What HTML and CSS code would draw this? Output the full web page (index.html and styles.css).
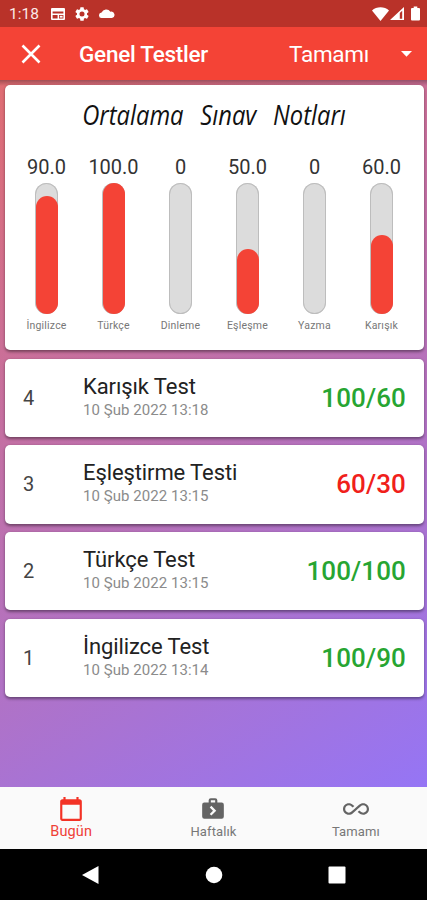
FILE: index.html
```html
<!DOCTYPE html>
<html lang="tr">
<head>
<meta charset="utf-8">
<meta name="viewport" content="width=device-width, initial-scale=1">
<title>Genel Testler</title>
<link rel="stylesheet" href="styles.css">
</head>
<body>
<div class="screen">
  <div class="status">
    <span class="clock">1:18</span>
    <svg class="s-news" viewBox="0 0 14 12"><path fill-rule="evenodd" d="M1 0h12a1 1 0 0 1 1 1v10a1 1 0 0 1-1 1H1a1 1 0 0 1-1-1V1a1 1 0 0 1 1-1zM1.600 3.400v2.200h10.800V3.400zM1.600 7v3.400h5V7zM8 7v3.400h4.400V7z"/><path d="M8.800 7.800h2.800v1.800H8.800z"/></svg>
    <svg class="s-gear" viewBox="2 2 20 20"><path d="M19.140 12.940c.04-.3.06-.61.06-.94s-.02-.64-.07-.94l2.030-1.580a.49.49 0 0 0 .12-.61l-1.920-3.320a.49.49 0 0 0-.59-.22l-2.390.96a7 7 0 0 0-1.620-.94l-.36-2.540a.48.48 0 0 0-.48-.41h-3.840a.48.48 0 0 0-.47.41l-.36 2.540a7.300 7.300 0 0 0-1.620.94l-2.390-.96a.48.48 0 0 0-.59.22L2.740 8.870a.47.47 0 0 0 .12.61l2.030 1.580a6 6 0 0 0 0 1.880l-2.030 1.580a.49.49 0 0 0-.12.61l1.920 3.320c.12.22.37.29.59.22l2.390-.96c.5.38 1.030.7 1.620.94l.36 2.540c.05.24.24.41.48.41h3.840c.24 0 .44-.17.47-.41l.36-2.540a7 7 0 0 0 1.620-.94l2.390.96c.22.08.47 0 .59-.22l1.920-3.320a.47.47 0 0 0-.12-.61zM12 15.600a3.600 3.600 0 1 1 0-7.200 3.600 3.600 0 0 1 0 7.200z"/></svg>
    <svg class="s-cloud" viewBox="0 0 16 9"><path d="M2.800 9a2.700 2.700 0 0 1-.2-5.400A5 5 0 0 1 11.400 2.700 3.200 3.200 0 0 1 13 9z"/></svg>
    <span class="grow"></span>
    <svg class="s-wifi" viewBox="0 0 17 14"><path d="M8.500 14 0 3.500C4.500-.9 12.500-.9 17 3.500z"/></svg>
    <svg class="s-signal" viewBox="0 0 14 13"><path fill-rule="evenodd" d="M0 13 14 0v13zM9.800 6v5.700h2.400V3.700z"/></svg>
    <svg class="s-battery" viewBox="0 0 9 14"><path d="M2.700 0h3.600v1.500H8a1 1 0 0 1 1 1V13a1 1 0 0 1-1 1H1a1 1 0 0 1-1-1V2.500a1 1 0 0 1 1-1h1.700z"/></svg>
  </div>
  <header class="appbar">
    <svg class="close" viewBox="0 0 20 20"><path d="M1.500 1.500 18.500 18.500M18.500 1.500 1.500 18.500"/></svg>
    <h1 class="title">Genel Testler</h1>
    <span class="filter">Tamamı</span>
    <svg class="caret" viewBox="0 0 11 6"><path d="M0 0h11L5.500 5.700z"/></svg>
  </header>
  <main class="content">
    <section class="card chart">
      <h2 class="chart-title">Ortalama Sınav Notları</h2>
      <div class="bars">
        <div class="bar"><span class="value">90.0</span><div class="track"><div class="fill" style="height:90%"></div></div><span class="label">İngilizce</span></div>
        <div class="bar"><span class="value">100.0</span><div class="track"><div class="fill" style="height:100%"></div></div><span class="label">Türkçe</span></div>
        <div class="bar"><span class="value">0</span><div class="track"></div><span class="label">Dinleme</span></div>
        <div class="bar"><span class="value">50.0</span><div class="track"><div class="fill" style="height:50%"></div></div><span class="label">Eşleşme</span></div>
        <div class="bar"><span class="value">0</span><div class="track"></div><span class="label">Yazma</span></div>
        <div class="bar"><span class="value">60.0</span><div class="track"><div class="fill" style="height:60%"></div></div><span class="label">Karışık</span></div>
      </div>
    </section>
    <article class="card row"><span class="num">4</span><div class="info"><div class="name">Karışık Test</div><div class="date">10 Şub 2022 13:18</div></div><span class="score">100/60</span></article>
    <article class="card row"><span class="num">3</span><div class="info"><div class="name">Eşleştirme Testi</div><div class="date">10 Şub 2022 13:15</div></div><span class="score low">60/30</span></article>
    <article class="card row"><span class="num">2</span><div class="info"><div class="name">Türkçe Test</div><div class="date">10 Şub 2022 13:15</div></div><span class="score">100/100</span></article>
    <article class="card row"><span class="num">1</span><div class="info"><div class="name">İngilizce Test</div><div class="date">10 Şub 2022 13:14</div></div><span class="score">100/90</span></article>
  </main>
  <nav class="tabs">
    <div class="tab active">
      <svg viewBox="0 0 24 24"><path d="M20 3h-1V1h-2v2H7V1H5v2H4c-1.100 0-2 .9-2 2v16c0 1.100.9 2 2 2h16c1.100 0 2-.9 2-2V5c0-1.100-.9-2-2-2zm0 18H4V8h16v13z"/></svg>
      <span>Bugün</span>
    </div>
    <div class="tab">
      <svg viewBox="0 0 24 24"><path fill-rule="evenodd" d="M10 2h4a2 2 0 0 1 2 2v2h4a2 2 0 0 1 2 2v11a2 2 0 0 1-2 2H4a2 2 0 0 1-2-2V8a2 2 0 0 1 2-2h4V4a2 2 0 0 1 2-2zm0 2v2h4V4zm.5 14 4.500-4.500L10.500 9 9 10.500l3 3-3 3z"/></svg>
      <span>Haftalık</span>
    </div>
    <div class="tab">
      <svg viewBox="0 0 24 24"><path d="M18.600 6.620c-1.440 0-2.800.56-3.770 1.530L12 10.660 10.480 12h.01L7.800 14.390c-.64.64-1.490.99-2.400.99-1.870 0-3.390-1.510-3.390-3.380S3.530 8.620 5.400 8.620c.91 0 1.760.35 2.440 1.030l1.130 1 1.510-1.340L9.220 8.200C8.200 7.180 6.840 6.620 5.400 6.620 2.420 6.620 0 9.040 0 12s2.420 5.380 5.400 5.380c1.440 0 2.800-.56 3.770-1.530l2.830-2.500.01.01L13.520 12h-.01l2.690-2.390c.64-.64 1.490-.99 2.400-.99 1.870 0 3.390 1.510 3.390 3.380s-1.520 3.380-3.390 3.380c-.9 0-1.760-.35-2.440-1.030l-1.140-1.010-1.510 1.340 1.270 1.120c1.020 1.010 2.370 1.570 3.820 1.570 2.980 0 5.400-2.410 5.400-5.380s-2.420-5.370-5.400-5.370z"/></svg>
      <span>Tamamı</span>
    </div>
  </nav>
  <div class="system">
    <svg viewBox="0 0 18 18"><path d="M0 9 16.500 0v18z"/></svg>
    <svg viewBox="0 0 18 18"><circle cx="9" cy="9" r="8.300"/></svg>
    <svg viewBox="0 0 18 18"><rect x=".5" y=".5" width="17" height="17" rx="1"/></svg>
  </div>
</div>
</body>
</html>
```
FILE: styles.css
```css
* { box-sizing: border-box; }
body { margin: 0; font-family: Roboto, "Liberation Sans", sans-serif; color: #222; }
h1, h2 { margin: 0; font-weight: 400; }
svg { display: block; fill: #fff; flex: none; }
.screen { width: 427px; height: 900px; display: flex; flex-direction: column; overflow: hidden; }

.status { height: 27px; flex: none; background: #b93229; display: flex; align-items: center; padding: 0 7px 0 9px; color: #fbe9e7; }
.clock { font-size: 15.500px; width: 42px; white-space: nowrap; }
.s-news { width: 14px; height: 12px; }
.s-gear { width: 14px; height: 14px; margin-left: 10px; }
.s-cloud { width: 16px; height: 9px; margin-left: 10px; }
.grow { flex: 1; }
.s-wifi { width: 17px; height: 14px; }
.s-signal { width: 14px; height: 13px; margin-left: 1px; }
.s-battery { width: 9px; height: 15px; margin-left: 7px; }

.appbar { height: 53px; flex: none; background: #f44336; color: #fff; display: flex; align-items: center; padding: 0 15px 0 21px; }
.close { width: 20px; height: 20px; fill: none; stroke: #fff; stroke-width: 2.600; }
.title { margin-left: 38px; font-size: 22.500px; font-weight: 500; letter-spacing: -.25px; flex: 1; white-space: nowrap; }
.filter { font-size: 22.500px; letter-spacing: -.3px; }
.caret { width: 11px; height: 6px; margin-left: 32px; }

.content { flex: 1; min-height: 0; padding: 5px 3px 0 5px; display: flex; flex-direction: column; gap: 8.500px; background: linear-gradient(rgba(0,0,0,.28), rgba(0,0,0,0)) 0 0 / 100% 6px no-repeat, linear-gradient(149deg, #e06d72, #9575f5); }
.card { background: #fff; border-radius: 5px; box-shadow: 0 1.500px 3px rgba(0,0,0,.4); flex: none; }
.chart { height: 265px; padding: 12px 9px 0 8px; }
.chart-title { font-family: "Open Sans", sans-serif; font-style: italic; font-size: 27px; line-height: 36px; word-spacing: 12px; text-align: center; color: #111; white-space: nowrap; transform: scaleX(.88); }
.bars { display: grid; grid-template-columns: repeat(6, 1fr); margin-top: 22px; }
.bar { display: flex; flex-direction: column; align-items: center; }
.value { font-size: 20px; line-height: 24px; color: #333; }
.track { width: 23px; height: 131px; margin-top: 4px; border-radius: 12px; box-shadow: inset 0 0 0 1px #bdbdbd; background: #dcdcdc; display: flex; align-items: flex-end; padding: 0 .5px; }
.fill { width: 100%; border-radius: 11px; background: #f44336; }
.label { font-size: 10.500px; line-height: 14px; margin-top: 5px; letter-spacing: .2px; color: #777; }

.row { height: 78.300px; display: flex; align-items: center; padding: 0 18px; }
.num { width: 60px; font-size: 20px; color: #444; }
.info { flex: 1; }
.name { font-size: 22px; line-height: 26px; letter-spacing: -.1px; margin-top: -2px; }
.date { font-size: 15px; line-height: 20px; letter-spacing: .05px; color: #8b8b8b; }
.score { font-size: 26px; font-weight: 500; letter-spacing: .1px; color: #27a532; }
.score.low { color: #f0201a; }

.tabs { height: 62px; flex: none; background: #fafafa; display: grid; grid-template-columns: repeat(3, 1fr); }
.tab { display: flex; flex-direction: column; align-items: center; padding-top: 9px; font-size: 13px; letter-spacing: .1px; line-height: 20px; color: #777; }
.tab svg { width: 26px; height: 26px; fill: #646464; }
.tab.active { color: #ef4036; font-size: 14.500px; }
.tab.active svg { fill: #f33225; }

.system { height: 51px; flex: none; background: #000; display: flex; justify-content: center; align-items: center; gap: 105px; }
.system svg { width: 18px; height: 18px; }
```
